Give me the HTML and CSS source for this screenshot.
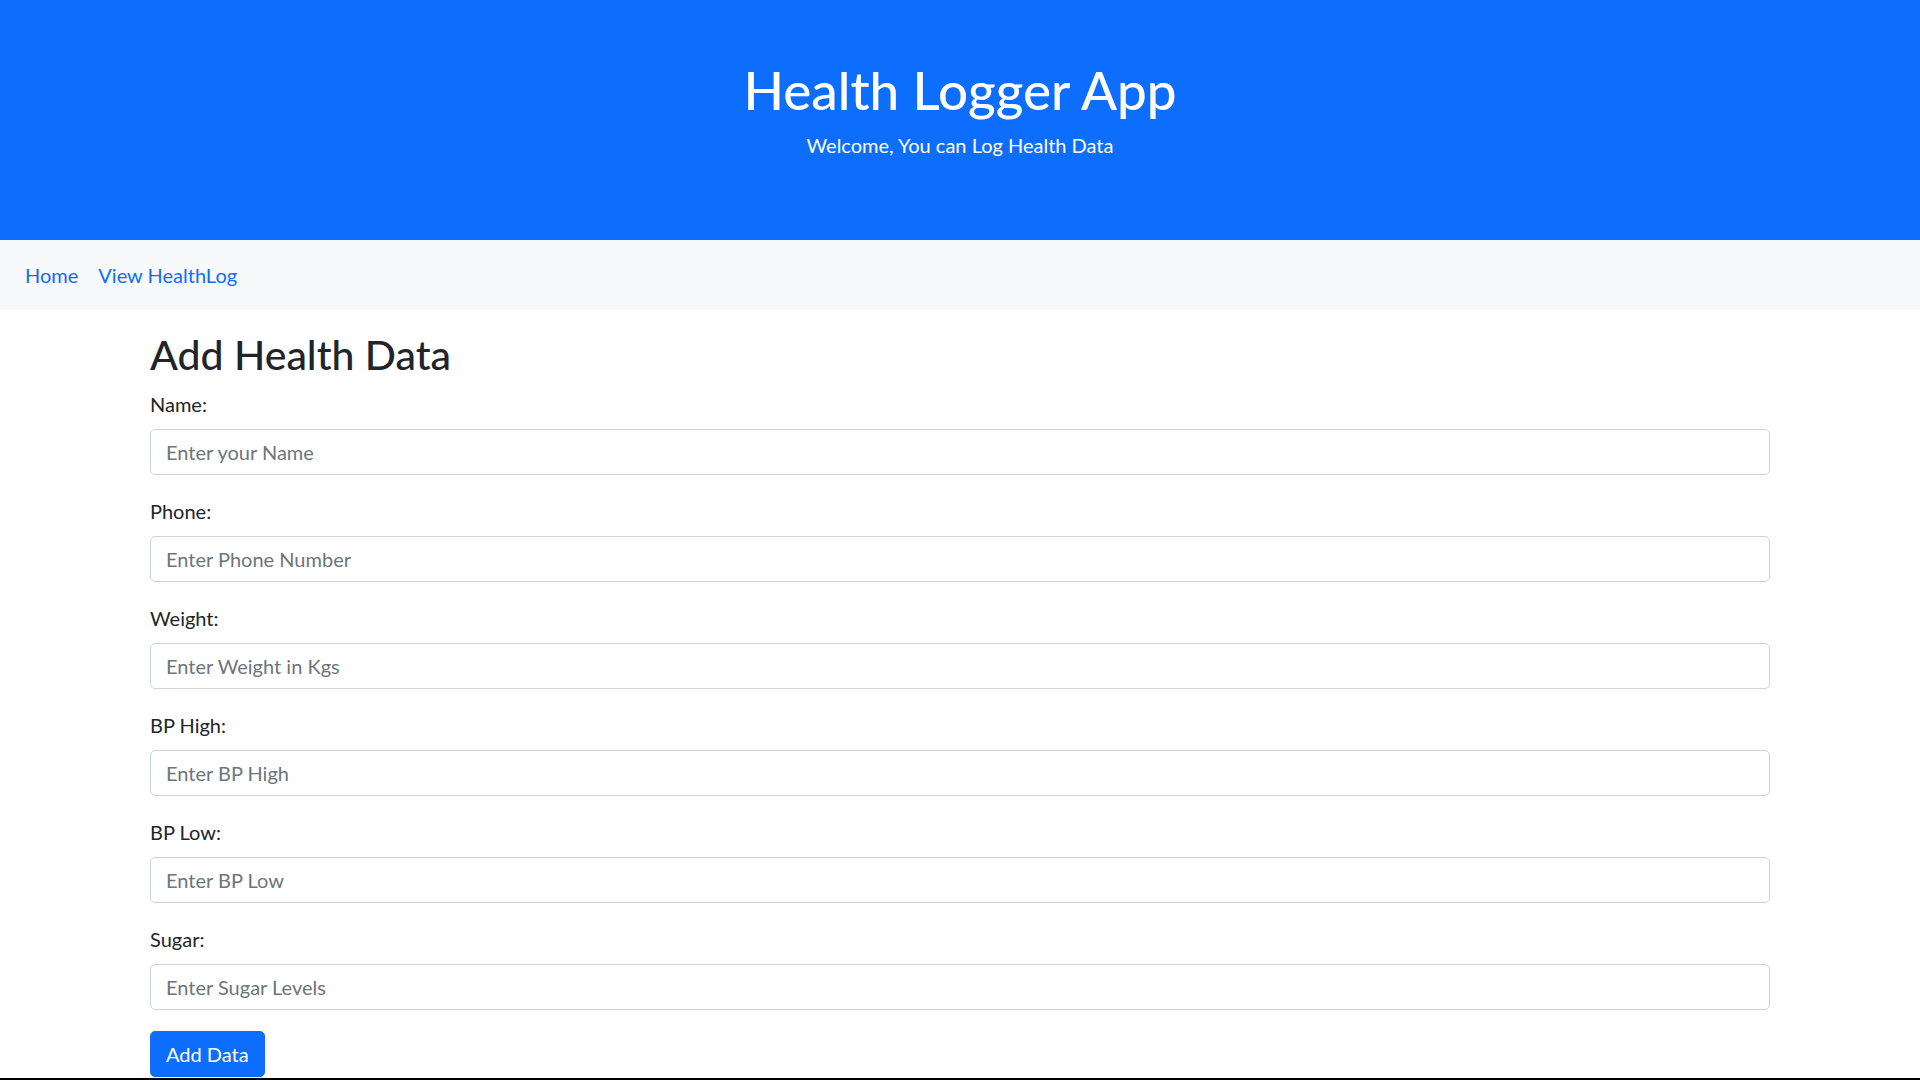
FILE: index.html
```html
<!DOCTYPE html>
<html lang="en">
<head>
<meta charset="utf-8">
<title>Health Logger App</title>
<link rel="stylesheet" href="styles.css">
</head>
<body>
<header class="hero">
  <h1 class="hero-title">Health Logger App</h1>
  <p class="hero-sub">Welcome, You can Log Health Data</p>
</header>
<nav class="navbar">
  <a class="nav-link" href="#">Home</a>
  <a class="nav-link" href="#">View HealthLog</a>
</nav>
<main class="container">
  <h2 class="page-title">Add Health Data</h2>
  <form class="form">
    <div class="group">
      <label class="label" for="name">Name:</label>
      <input class="input" id="name" type="text" placeholder="Enter your Name">
    </div>
    <div class="group">
      <label class="label" for="phone">Phone:</label>
      <input class="input" id="phone" type="text" placeholder="Enter Phone Number">
    </div>
    <div class="group">
      <label class="label" for="weight">Weight:</label>
      <input class="input" id="weight" type="text" placeholder="Enter Weight in Kgs">
    </div>
    <div class="group">
      <label class="label" for="bph">BP High:</label>
      <input class="input" id="bph" type="text" placeholder="Enter BP High">
    </div>
    <div class="group">
      <label class="label" for="bpl">BP Low:</label>
      <input class="input" id="bpl" type="text" placeholder="Enter BP Low">
    </div>
    <div class="group">
      <label class="label" for="sugar">Sugar:</label>
      <input class="input" id="sugar" type="text" placeholder="Enter Sugar Levels">
    </div>
    <button class="btn" type="button">Add Data</button>
  </form>
</main>
<div class="frame-edge"></div>
</body>
</html>
```
FILE: styles.css
```css
* { box-sizing: border-box; }
html, body { margin: 0; padding: 0; }
body {
  font-family: Lato, "Liberation Sans", sans-serif;
  font-size: 20px;
  line-height: 30px;
  color: #212529;
  background: #fff;
  overflow: hidden;
  height: 1080px;
}
.hero {
  background: #0d6efd;
  color: #fff;
  text-align: center;
  padding: 60px 20px;
  height: 240px;
}
.hero-title {
  margin: 0 0 10px;
  font-size: 53px;
  line-height: 60px;
  font-weight: 500;
}
.hero-sub {
  margin: 0;
  font-size: 20px;
  line-height: 30px;
}
.navbar {
  background: #f8f9fa;
  height: 70px;
  display: flex;
  align-items: center;
  padding: 0 15px;
}
.nav-link {
  color: #0d6efd;
  text-decoration: none;
  padding: 0 10px;
  font-size: 20px;
}
.container {
  width: 1620px;
  margin: 0 auto;
  padding-top: 21px;
}
.page-title {
  margin: 0 0 10px;
  font-size: 41px;
  line-height: 48px;
  font-weight: 500;
}
.group { margin-bottom: 21px; }
.label {
  display: block;
  margin-bottom: 10px;
  line-height: 30px;
}
.input {
  display: block;
  width: 100%;
  height: 46px;
  padding: 7px 15px;
  font-family: inherit;
  font-size: 20px;
  color: #212529;
  background: #fff;
  border: 1px solid #ced4da;
  border-radius: 5px;
  outline: none;
}
.input::placeholder { color: #6c757d; }
.btn {
  display: inline-block;
  height: 46px;
  padding: 0 15px;
  font-family: inherit;
  font-size: 20px;
  color: #fff;
  background: #0d6efd;
  border: 1px solid #0d6efd;
  border-radius: 5px;
}
.frame-edge {
  position: fixed;
  left: 0;
  right: 0;
  bottom: 0;
  height: 2px;
  background: #000;
}
```
